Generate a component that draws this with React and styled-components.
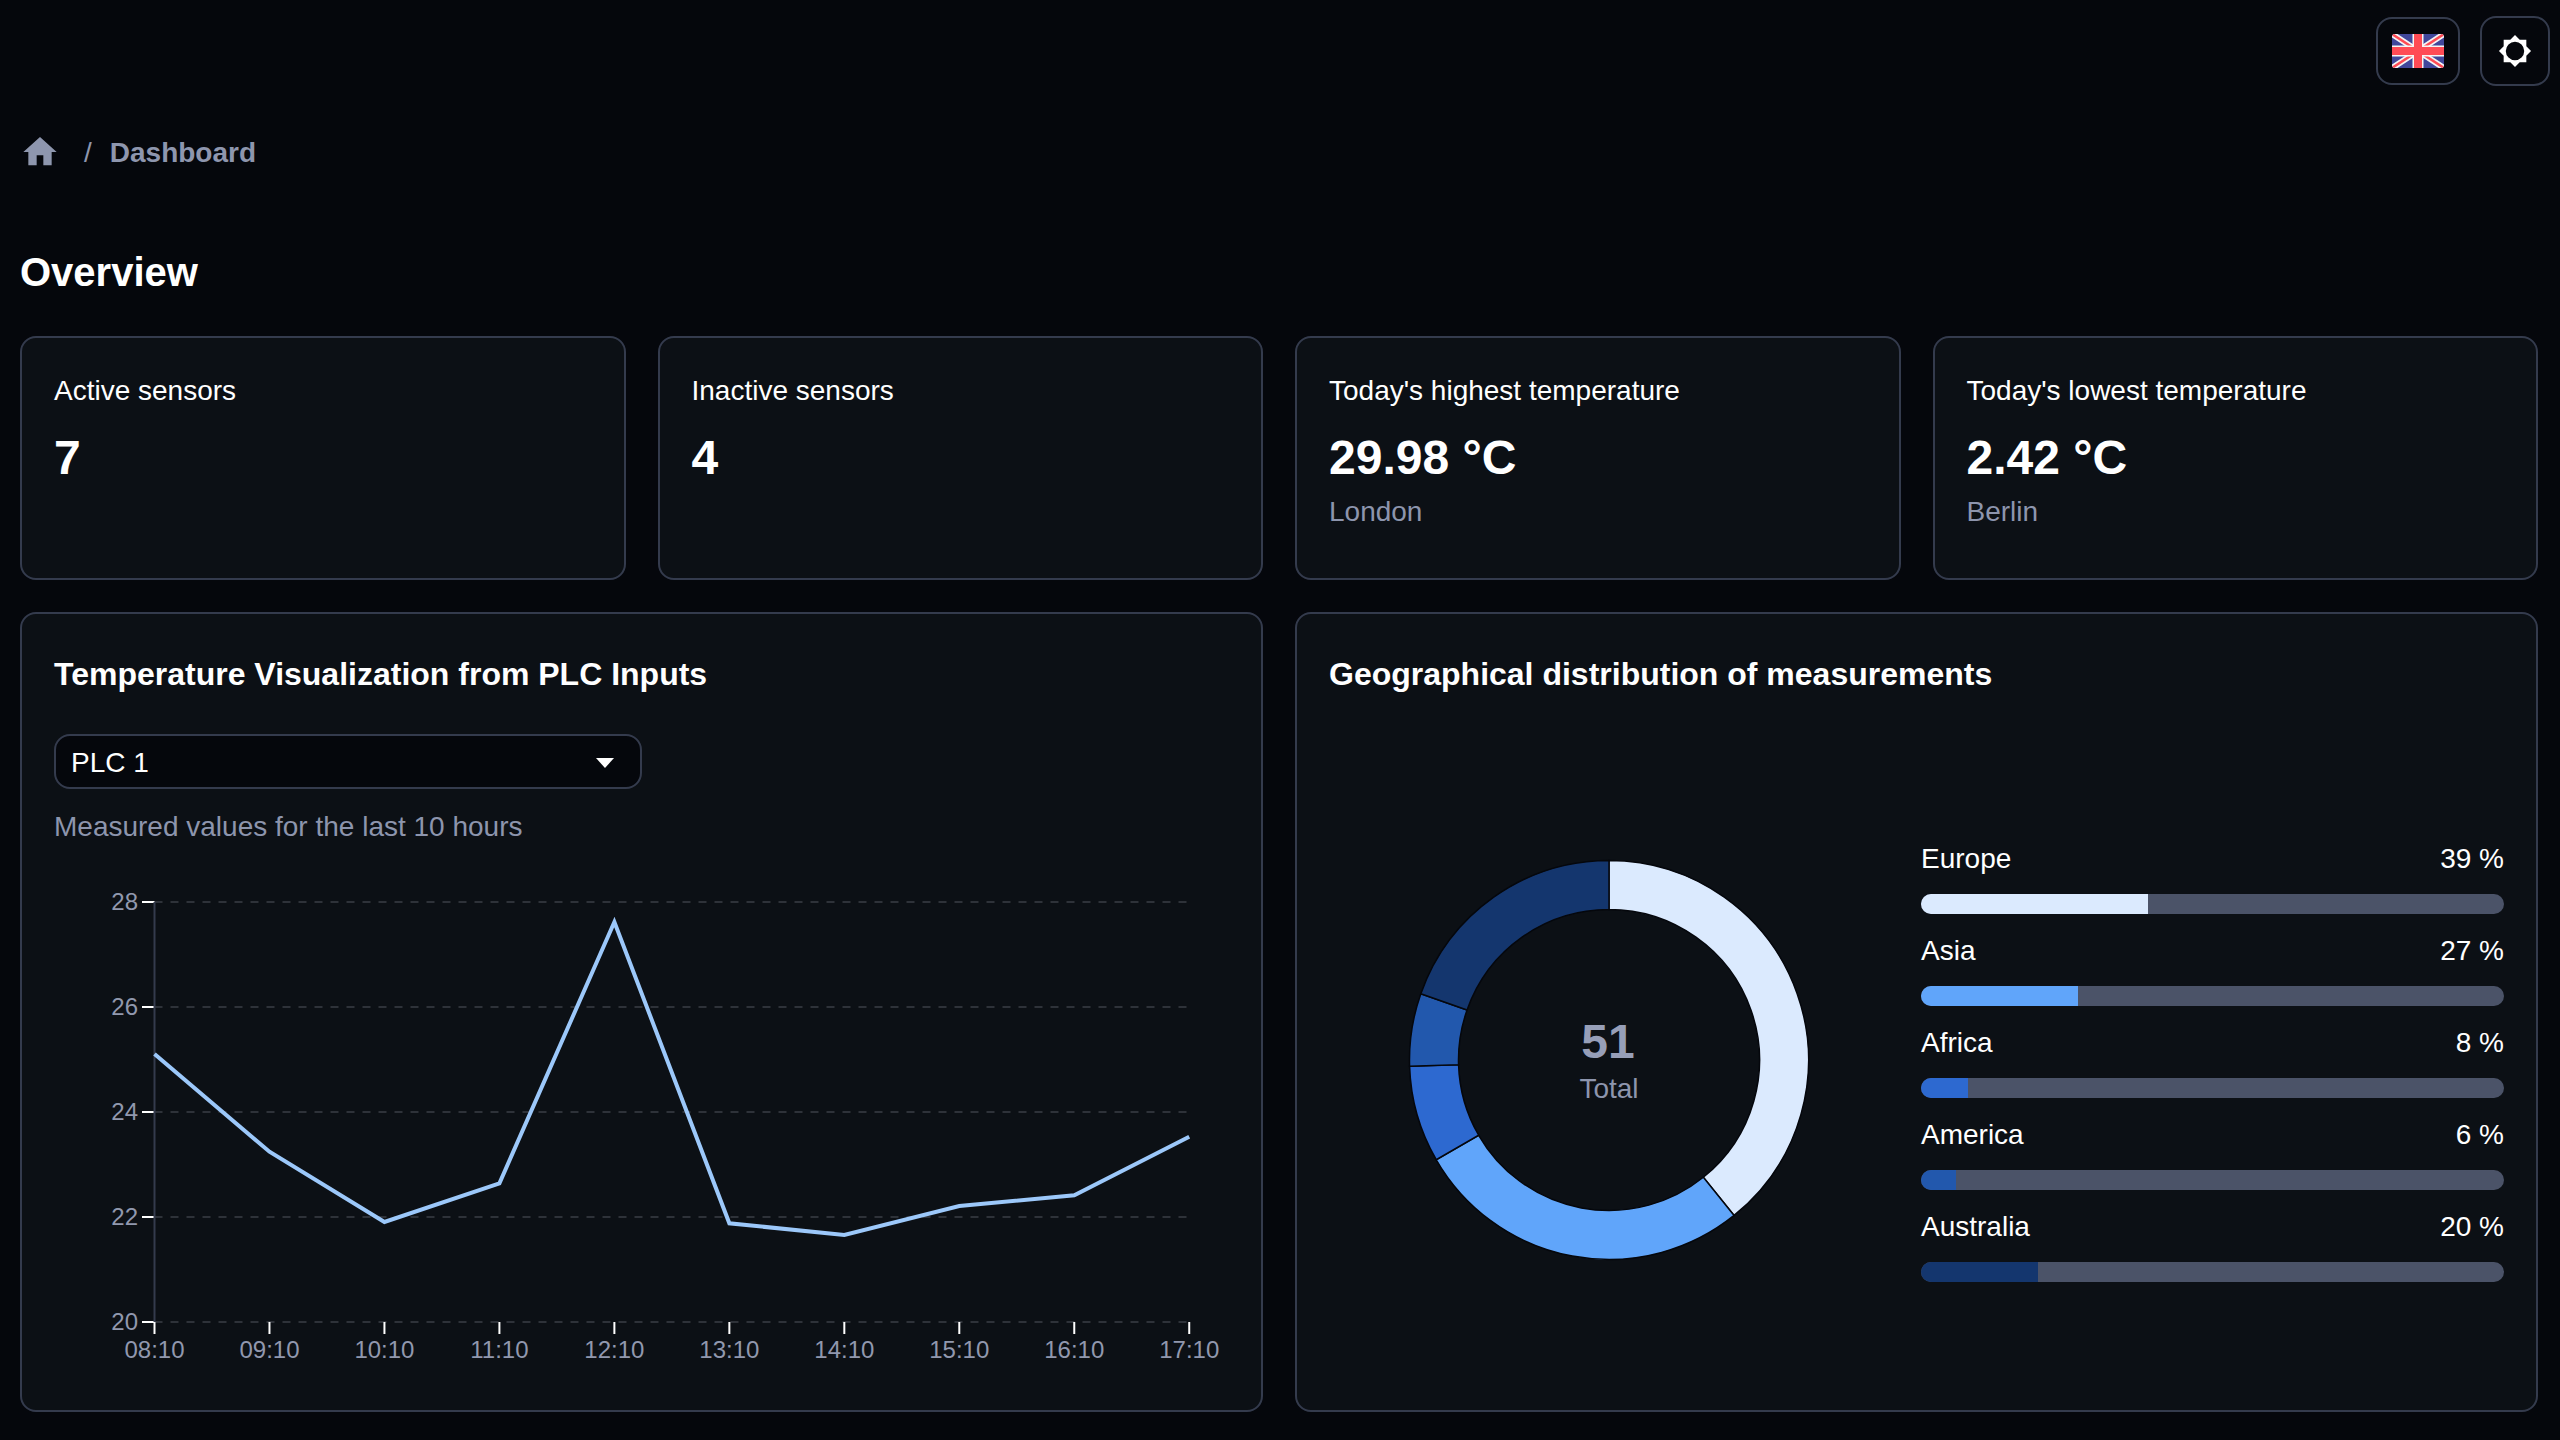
import React from "react";
import styled, { createGlobalStyle } from "styled-components";

const GlobalStyle = createGlobalStyle`
  html, body { margin: 0; padding: 0; background: #05070c; }
  body { font-family: "Liberation Sans", Arial, sans-serif; color: #fff; }
  * { box-sizing: border-box; }
`;

const Page = styled.div`
  width: 2560px;
  min-height: 1440px;
  padding: 16px 22px 0 20px;
  background: #05070c;
`;
const TopBar = styled.header`
  display: flex;
  justify-content: flex-end;
  align-items: center;
  gap: 20px;
  height: 70px;
  margin-right: -12px;
`;
const IconButton = styled.button`
  display: flex;
  align-items: center;
  justify-content: center;
  width: ${(p) => p.$w}px;
  height: ${(p) => p.$h}px;
  padding: 0;
  background: transparent;
  border: 2px solid #343b4d;
  border-radius: 16px;
`;
const Breadcrumbs = styled.nav`
  display: flex;
  align-items: center;
  height: 40px;
  margin-top: 46px;
  color: #8e96ae;
  font-size: 28px;
  line-height: 43px;
`;
const Slash = styled.span`
  margin: 0 18px 0 24px;
`;
const Crumb = styled.span`
  font-weight: 700;
`;
const Heading = styled.h1`
  margin: 70px 0 34px;
  font-size: 40px;
  line-height: 60px;
  font-weight: 700;
`;
const StatGrid = styled.section`
  display: grid;
  grid-template-columns: repeat(4, 1fr);
  gap: 32px;
`;
const Card = styled.article`
  background: #0c1015;
  border: 2px solid #343b4d;
  border-radius: 16px;
  padding: 32px;
`;
const StatCard = styled(Card)`
  height: 244px;
`;
const StatLabel = styled.div`
  font-size: 28px;
  line-height: 42px;
`;
const StatValue = styled.div`
  margin-top: 14px;
  font-size: 48px;
  line-height: 63px;
  font-weight: 700;
`;
const StatSub = styled.div`
  margin-top: 3px;
  font-size: 28px;
  line-height: 40px;
  color: #8d95ad;
`;
const PanelGrid = styled.section`
  display: grid;
  grid-template-columns: repeat(2, 1fr);
  gap: 32px;
  margin-top: 32px;
`;
const Panel = styled(Card)`
  height: 800px;
`;
const PanelTitle = styled.h2`
  margin: 0;
  font-size: 32px;
  line-height: 56px;
  font-weight: 700;
`;
const Select = styled.div`
  display: flex;
  align-items: center;
  justify-content: space-between;
  width: 588px;
  height: 55px;
  margin-top: 32px;
  padding: 2px 26px 0 15px;
  background: #05070c;
  border: 2px solid #343b4d;
  border-radius: 16px;
  font-size: 28px;
`;
const Caret = styled.span`
  width: 0;
  height: 0;
  border-left: 9px solid transparent;
  border-right: 9px solid transparent;
  border-top: 10px solid #fff;
`;
const Caption = styled.p`
  margin: 18px 0 0;
  font-size: 28px;
  line-height: 40px;
  color: #8d95ad;
`;
const ChartSvg = styled.svg`
  display: block;
  width: 1175px;
  height: 497px;
  margin-top: 33px;
  font-family: "Liberation Sans", Arial, sans-serif;
`;
const GeoBody = styled.div`
  display: flex;
  align-items: center;
  gap: 32px;
  margin-top: 41px;
  height: 634px;
`;
const DonutSvg = styled.svg`
  display: block;
  flex: none;
  width: 560px;
  height: 444px;
  font-family: "Liberation Sans", Arial, sans-serif;
`;
const Legend = styled.ul`
  flex: 1;
  display: flex;
  flex-direction: column;
  gap: 16px;
  margin: 0;
  padding: 0;
  list-style: none;
`;
const LegendHead = styled.div`
  display: flex;
  justify-content: space-between;
  font-size: 28px;
  line-height: 42px;
`;
const Track = styled.div`
  height: 20px;
  margin-top: 14px;
  border-radius: 10px;
  background: #4b5368;
  overflow: hidden;
`;
const Fill = styled.div`
  height: 100%;
  background: ${(p) => p.$color};
`;

const stats = [
  { label: "Active sensors", value: "7" },
  { label: "Inactive sensors", value: "4" },
  { label: "Today's highest temperature", value: "29.98 °C", sub: "London" },
  { label: "Today's lowest temperature", value: "2.42 °C", sub: "Berlin" },
];

const regions = [
  { name: "Europe", pct: 39, count: 20, color: "#dbeafe" },
  { name: "Asia", pct: 27, count: 14, color: "#60a5fa" },
  { name: "Africa", pct: 8, count: 4, color: "#2d69d0" },
  { name: "America", pct: 6, count: 3, color: "#2258ad" },
  { name: "Australia", pct: 20, count: 10, color: "#14366e" },
];

const hours = ["08:10", "09:10", "10:10", "11:10", "12:10", "13:10", "14:10", "15:10", "16:10", "17:10"];
const lineY = [1054, 1151.7, 1222, 1183.3, 922, 1223.3, 1235, 1206, 1195.3, 1136.7];
const xAt = (i) => 154.5 + i * 114.97;
const yTicks = [
  { v: 28, y: 902 },
  { v: 26, y: 1007 },
  { v: 24, y: 1112 },
  { v: 22, y: 1217 },
  { v: 20, y: 1322 },
];

function LineChart() {
  const points = lineY.map((y, i) => `${xAt(i)},${y}`).join(" ");
  return (
    <ChartSvg viewBox="54 880 1175 497">
      {yTicks.map((t) => (
        <g key={t.v}>
          <line x1="154.5" x2="1188" y1={t.y} y2={t.y} stroke="#2e3239" strokeWidth="2" strokeDasharray="8 8" />
          <line x1="142" x2="154.5" y1={t.y} y2={t.y} stroke="#fff" strokeWidth="2" />
          <text x="138" y={t.y + 7.5} textAnchor="end" fontSize="24" fill="#9198ae">{t.v}</text>
        </g>
      ))}
      <line x1="154.5" x2="154.5" y1="902" y2="1322" stroke="#343b4d" strokeWidth="2" />
      {hours.map((h, i) => (
        <g key={h}>
          <line x1={xAt(i)} x2={xAt(i)} y1="1322" y2="1334" stroke="#fff" strokeWidth="2" />
          <text x={xAt(i)} y="1358" textAnchor="middle" fontSize="24" fill="#9198ae">{h}</text>
        </g>
      ))}
      <polyline points={points} fill="none" stroke="#9cc8fa" strokeWidth="4" strokeLinejoin="miter" />
    </ChartSvg>
  );
}

function arcPath(a0, a1, R, r) {
  const p = (rad, a) => `${(rad * Math.sin(a)).toFixed(2)} ${(-rad * Math.cos(a)).toFixed(2)}`;
  const large = a1 - a0 > Math.PI ? 1 : 0;
  return `M${p(R, a0)} A${R} ${R} 0 ${large} 1 ${p(R, a1)} L${p(r, a1)} A${r} ${r} 0 ${large} 0 ${p(r, a0)} Z`;
}

function Donut() {
  let acc = 0;
  return (
    <DonutSvg viewBox="-280 -222 560 444">
      {regions.map((r) => {
        const a0 = (acc / 51) * Math.PI * 2;
        acc += r.count;
        const a1 = (acc / 51) * Math.PI * 2;
        return <path key={r.name} d={arcPath(a0, a1, 199.5, 150.5)} fill={r.color} stroke="#05070c" strokeWidth="1.5" />;
      })}
      <text x="-1" y="-1.7" textAnchor="middle" fontSize="48" fontWeight="700" fill="#979fb8">51</text>
      <text x="0" y="37.7" textAnchor="middle" fontSize="28" fill="#8d95ad">Total</text>
    </DonutSvg>
  );
}

function UkFlag() {
  return (
    <svg width="52" height="34" viewBox="0 0 52 34">
      <defs>
        <clipPath id="flagClip"><rect width="52" height="34" rx="3" /></clipPath>
      </defs>
      <g clipPath="url(#flagClip)">
        <rect width="52" height="34" fill="#41479b" />
        <path d="M0 0L52 34M52 0L0 34" stroke="#f5f5f5" strokeWidth="6" />
        <path d="M0 0L52 34M52 0L0 34" stroke="#ff4b55" strokeWidth="2.5" />
        <path d="M26 0V34M0 17H52" stroke="#f5f5f5" strokeWidth="11" />
        <path d="M26 0V34M0 17H52" stroke="#ff4b55" strokeWidth="8" />
      </g>
    </svg>
  );
}

export default function App() {
  return (
    <>
      <GlobalStyle />
      <Page>
        <TopBar>
          <IconButton $w={84} $h={68} aria-label="Language"><UkFlag /></IconButton>
          <IconButton $w={70} $h={70} aria-label="Theme">
            <svg width="34" height="34" viewBox="0 0 24 24" fill="#fff">
              <path fillRule="evenodd" d="M20 15.31 23.31 12 20 8.69V4h-4.69L12 .69 8.69 4H4v4.69L.69 12 4 15.31V20h4.69L12 23.31 15.31 20H20v-4.69zM12 18.5a6.5 6.5 0 1 1 0-13 6.5 6.5 0 0 1 0 13z" />
            </svg>
          </IconButton>
        </TopBar>
        <Breadcrumbs>
          <svg width="40" height="40" viewBox="0 0 24 24" fill="#8e96ae">
            <path d="M10 20v-6h4v6h5v-8h3L12 3 2 12h3v8z" />
          </svg>
          <Slash>/</Slash>
          <Crumb>Dashboard</Crumb>
        </Breadcrumbs>
        <Heading>Overview</Heading>
        <StatGrid>
          {stats.map((s) => (
            <StatCard key={s.label}>
              <StatLabel>{s.label}</StatLabel>
              <StatValue>{s.value}</StatValue>
              {s.sub && <StatSub>{s.sub}</StatSub>}
            </StatCard>
          ))}
        </StatGrid>
        <PanelGrid>
          <Panel>
            <PanelTitle>Temperature Visualization from PLC Inputs</PanelTitle>
            <Select>PLC 1<Caret /></Select>
            <Caption>Measured values for the last 10 hours</Caption>
            <LineChart />
          </Panel>
          <Panel>
            <PanelTitle>Geographical distribution of measurements</PanelTitle>
            <GeoBody>
              <Donut />
              <Legend>
                {regions.map((r) => (
                  <li key={r.name}>
                    <LegendHead><span>{r.name}</span><span>{r.pct} %</span></LegendHead>
                    <Track><Fill $color={r.color} style={{ width: `${r.pct}%` }} /></Track>
                  </li>
                ))}
              </Legend>
            </GeoBody>
          </Panel>
        </PanelGrid>
      </Page>
    </>
  );
}
